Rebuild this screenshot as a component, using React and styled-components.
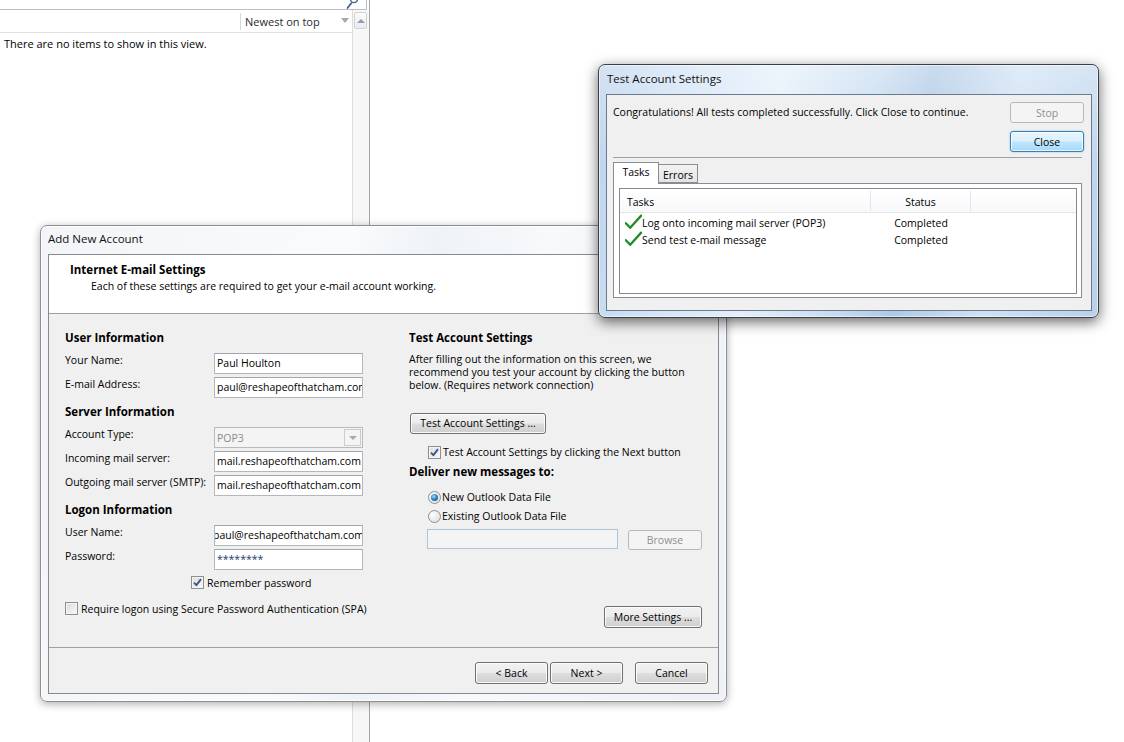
import React from 'react';
import styled, { createGlobalStyle, css } from 'styled-components';

const FONT = `"Segoe UI", "Open Sans", "Liberation Sans", sans-serif`;

const Global = createGlobalStyle`
  html, body { margin: 0; padding: 0; background: #fff; }
  body { font-family: ${FONT}; font-size: 10.5px; color: #000; }
  * { box-sizing: border-box; }
`;

const Desktop = styled.div`
  position: relative;
  width: 1124px;
  height: 742px;
  overflow: hidden;
  background: #fff;
`;

/* ---------- Outlook background pane ---------- */
const Pane = styled.div`
  width: 370px;
  height: 742px;
  border-right: 1px solid #a5a5a5;
  display: flex;
  flex-direction: column;
`;

const SearchStrip = styled.div`
  height: 10px;
  margin-right: 2px;
  border-right: 1px solid #b9bec6;
  border-bottom: 1px solid #b9bec6;
  display: flex;
  justify-content: flex-end;
  align-items: flex-end;
  padding-right: 8px;
  overflow: hidden;
`;

const PaneBody = styled.div`
  flex: 1;
  display: flex;
`;

const ListCol = styled.div`
  flex: 1;
  display: flex;
  flex-direction: column;
`;

const ListHeader = styled.div`
  height: 23px;
  display: flex;
  align-items: center;
  border-bottom: 1px solid #e2e2e2;
`;

const HeaderSpacer = styled.div`
  flex: 1;
`;

const HeaderSep = styled.div`
  width: 1px;
  height: 17px;
  background: #d8d8d8;
`;

const SortLabel = styled.div`
  width: 97px;
  padding-left: 4px;
  color: #2b2b2b;
  font-size: 11px;
  white-space: nowrap;
`;

const SortArrow = styled.div`
  width: 0;
  height: 0;
  margin: 0 3px 2px 3px;
  border-left: 4.5px solid transparent;
  border-right: 4.5px solid transparent;
  border-top: 5px solid #a8a8a8;
`;

const EmptyMsg = styled.div`
  padding: 3px 4px;
  line-height: 15px;
  font-size: 11px;
  color: #000;
`;

const ScrollCol = styled.div`
  width: 17px;
  border-left: 1px solid #dcdcdc;
  background: #f7f7f7;
  padding: 2px 2px 0 1px;
`;

const ScrollUp = styled.div`
  height: 17px;
  border: 1px solid #cfd3d8;
  border-radius: 2px;
  background: linear-gradient(#fbfbfb, #e9ebee);
  display: flex;
  align-items: center;
  justify-content: center;
`;

const UpTri = styled.div`
  width: 0;
  height: 0;
  border-left: 4px solid transparent;
  border-right: 4px solid transparent;
  border-bottom: 4px solid #8d9db4;
`;

/* ---------- Windows ---------- */
const Window = styled.div`
  position: absolute;
  left: ${p => p.$left}px;
  top: ${p => p.$top}px;
  width: ${p => p.$width}px;
  display: flex;
  flex-direction: column;
  border-radius: 7px;
`;

const InactiveWindow = styled(Window)`
  border: 1px solid #8c8e90;
  padding: 0 7px 7px 7px;
  background: linear-gradient(100deg, #f2f4f7 0%, #fafbfc 40%, #eef3f8 52%, #f7f9fb 66%, #eef1f5 100%);
  box-shadow: inset 0 0 0 1px rgba(255, 255, 255, 0.8), 0 2px 9px rgba(0, 0, 0, 0.32);
`;

const ActiveWindow = styled(Window)`
  border: 1px solid #3b3f45;
  padding: 0 6px 6px 7px;
  background:
    linear-gradient(180deg, rgba(255,255,255,0.35) 0%, rgba(255,255,255,0) 40%),
    linear-gradient(100deg, #bcd3ec 0%, #d3e4f6 18%, #e4effa 34%, #c6dbf0 52%, #aec8e5 62%, #cfe1f4 78%, #b9d1eb 100%);
  box-shadow: inset 0 0 0 1px rgba(255, 255, 255, 0.55), 0 4px 14px rgba(0, 0, 0, 0.6);
`;

const TitleBar = styled.div`
  height: ${p => p.$h}px;
  display: flex;
  align-items: center;
  padding-left: ${p => p.$pad || 0}px;
  padding-bottom: 3px;
  color: #111;
  font-size: 11.5px;
  white-space: nowrap;
`;

const Client = styled.div`
  border: 1px solid ${p => p.$border};
  background: #f0f0f0;
  display: flex;
  flex-direction: column;
`;

/* ---------- Buttons ---------- */
const Btn = styled.div`
  flex: none;
  width: ${p => p.$w}px;
  height: ${p => p.$h || 22}px;
  display: flex;
  align-items: center;
  justify-content: center;
  border: 1px solid #707070;
  border-radius: 3px;
  background: linear-gradient(#f2f2f2 0%, #ebebeb 48%, #dddddd 52%, #cfcfcf 100%);
  box-shadow: inset 0 0 0 1px rgba(255, 255, 255, 0.85);
  color: #000;
  white-space: nowrap;
  ${p => p.$variant === 'disabled' && css`
    border-color: #b5b9bc;
    background: #f4f4f4;
    box-shadow: none;
    color: #8f8f8f;
  `}
  ${p => p.$variant === 'default' && css`
    border-color: #3c7fb1;
    background: linear-gradient(#e8f5fd 0%, #d9f0fc 48%, #bee6fd 52%, #a7d9f5 100%);
    box-shadow: inset 0 0 0 1px rgba(255, 255, 255, 0.7), 0 0 2px rgba(60, 160, 230, 0.6);
  `}
`;

/* ---------- Form controls ---------- */
const CheckBoxBox = styled.span`
  flex: none;
  width: 13px;
  height: 13px;
  border: 1px solid #8e8f8f;
  background: linear-gradient(135deg, #dcdcdc, #f8f8f8);
  box-shadow: inset 0 0 0 1px #f4f4f4;
  display: inline-flex;
  align-items: center;
  justify-content: center;
`;

const RadioDot = styled.span`
  flex: none;
  width: 13px;
  height: 13px;
  border-radius: 50%;
  border: 1px solid #8e8f8f;
  background: radial-gradient(circle at 35% 35%, #ffffff, #d8d8d8);
  display: inline-flex;
  align-items: center;
  justify-content: center;
  &::after {
    content: '';
    display: ${p => (p.$on ? 'block' : 'none')};
    width: 7px;
    height: 7px;
    border-radius: 50%;
    background: radial-gradient(circle at 40% 35%, #a8e0fb 0%, #2a87c8 45%, #0d4d84 100%);
  }
`;

const Check = ({ checked }) => (
  <CheckBoxBox>
    {checked && (
      <svg width="9" height="9" viewBox="0 0 9 9">
        <path d="M1 4.6 L3.4 7.2 L8 1.2" fill="none" stroke="#3d5489" strokeWidth="1.9" strokeLinejoin="round" />
      </svg>
    )}
  </CheckBoxBox>
);

const OptionRow = styled.div`
  display: flex;
  align-items: center;
  gap: ${p => p.$gap || 3}px;
  height: 15px;
  margin-top: ${p => p.$mt || 0}px;
  padding-left: ${p => p.$indent || 0}px;
  white-space: nowrap;
`;

const SectionTitle = styled.div`
  font-weight: 700;
  font-size: 11.5px;
  line-height: 15px;
  height: 15px;
  margin: ${p => (p.$tight ? '4px 0 0 0' : '3px 0 8px 0')};
  white-space: nowrap;
`;

const FieldRow = styled.div`
  display: grid;
  grid-template-columns: 149px 149px;
  height: 21px;
  margin-bottom: 3px;
`;

const FieldLabel = styled.div`
  line-height: 15px;
  white-space: nowrap;
`;

const TextBox = styled.div`
  height: 21px;
  border: 1px solid #b4b8bd;
  border-top-color: #a3a7ad;
  background: #fff;
  padding-left: 2px;
  line-height: 18px;
  overflow: hidden;
  white-space: nowrap;
  color: ${p => (p.$secret ? '#1d3a6b' : '#000')};
`;

const Shifted = styled.span`
  display: inline-block;
  margin-left: ${p => p.$shift}px;
`;

const Combo = styled.div`
  height: 21px;
  border: 1px solid #b7bbbf;
  background: #f4f4f4;
  display: flex;
  align-items: center;
  justify-content: space-between;
  padding: 0 1px 0 2px;
  color: #8b8b8b;
`;

const ComboBtn = styled.div`
  width: 17px;
  height: 17px;
  border: 1px solid #c9cdd1;
  background: #f4f4f4;
  display: flex;
  align-items: center;
  justify-content: center;
  &::after {
    content: '';
    border-left: 4px solid transparent;
    border-right: 4px solid transparent;
    border-top: 4px solid #a9a9a9;
  }
`;

/* ---------- Add New Account client ---------- */
const WizardHeader = styled.div`
  height: 59px;
  background: #fff;
  border-bottom: 1px solid #a0a0a0;
  padding: 7px 0 0 21px;
`;

const WizardTitle = styled.div`
  font-weight: 700;
  font-size: 11.5px;
  line-height: 16px;
`;

const WizardSub = styled.div`
  line-height: 16px;
  padding-left: 21px;
`;

const WizardBody = styled.div`
  height: 333px;
  display: flex;
  gap: 46px;
  padding: 13px 16px 19px 16px;
`;

const LeftCol = styled.div`
  width: 298px;
  display: flex;
  flex-direction: column;
`;

const RightCol = styled.div`
  width: 293px;
  display: flex;
  flex-direction: column;
`;

const Para = styled.div`
  line-height: 13px;
  margin-top: -0.5px;
`;

const PathRow = styled.div`
  display: flex;
  gap: 10px;
  margin-top: 5px;
  padding-left: 18px;
`;

const PathBox = styled.div`
  width: 192px;
  height: 20px;
  border: 1px solid #aec4da;
  background: #f4f4f4;
`;

const WizardFooter = styled.div`
  height: 46px;
  border-top: 1px solid #a0a0a0;
  display: flex;
  justify-content: flex-end;
  padding: 14px 10px 0 0;
`;

/* ---------- Test dialog client ---------- */
const TestTop = styled.div`
  display: flex;
  justify-content: space-between;
  padding: 7px 7px 0 6px;
`;

const TestMsg = styled.div`
  line-height: 16px;
  padding-top: 2px;
  white-space: nowrap;
`;

const BtnStack = styled.div`
  display: flex;
  flex-direction: column;
  gap: 8px;
`;

const Rule = styled.div`
  height: 1px;
  margin: 5px 9px 0 6px;
  background: #a0a0a0;
`;

const TabStrip = styled.div`
  display: flex;
  align-items: flex-end;
  margin: 4px 0 0 6px;
  height: 21px;
  position: relative;
  z-index: 1;
`;

const Tab = styled.div`
  width: ${p => p.$w}px;
  height: ${p => (p.$active ? 22 : 19)}px;
  margin-bottom: ${p => (p.$active ? -1 : 0)}px;
  margin-left: ${p => (p.$active ? 0 : -1)}px;
  border: 1px solid #898c95;
  border-bottom: ${p => (p.$active ? 'none' : '1px solid #898c95')};
  background: ${p => (p.$active ? '#fff' : 'linear-gradient(#f3f3f3, #e3e3e3)')};
  display: flex;
  justify-content: center;
  padding-top: ${p => (p.$active ? 2 : 3)}px;
  line-height: 15px;
`;

const TabPanel = styled.div`
  height: 115px;
  margin: 0 9px 12px 6px;
  border: 1px solid #898c95;
  background: #fff;
  padding: 4px 4px 3px 5px;
`;

const ListView = styled.div`
  height: 106px;
  border: 1px solid #828790;
  background: #fff;
`;

const ListGrid = styled.div`
  display: grid;
  grid-template-columns: 251px 100px 1fr;
  height: ${p => (p.$head ? 24 : 17)}px;
  align-items: center;
  ${p => p.$head && css`
    border-bottom: 1px solid #e5e5e5;
    background: linear-gradient(#ffffff, #f7f8fa);
    margin-bottom: 1px;
    padding-top: 3px;
  `}
`;

const HeadCell = styled.div`
  height: 100%;
  display: flex;
  align-items: center;
  justify-content: ${p => (p.$center ? 'center' : 'flex-start')};
  padding-left: ${p => (p.$center ? 0 : 7)}px;
  border-right: ${p => (p.$last ? 'none' : '1px solid #e3e5e8')};
  margin-top: -3px;
  padding-top: 3px;
`;

const TaskCell = styled.div`
  display: flex;
  align-items: center;
  padding-left: 5px;
  white-space: nowrap;
`;

const StatusCell = styled.div`
  text-align: center;
  white-space: nowrap;
`;

const Tick = () => (
  <svg width="17" height="17" viewBox="0 0 17 17" style={{ flex: 'none' }}>
    <path d="M0.8 9.2 L5.2 13.8 L16.2 1.6" fill="none" stroke="#1f8c25" strokeWidth="2.3" strokeLinecap="round" strokeLinejoin="round" />
  </svg>
);

const SearchGlyph = () => (
  <svg width="12" height="9" viewBox="0 0 12 9">
    <circle cx="8" cy="-1" r="3.6" fill="none" stroke="#44638d" strokeWidth="1.3" />
    <path d="M1.5 8 L5.3 3.2" stroke="#44638d" strokeWidth="1.8" strokeLinecap="round" />
  </svg>
);

export default function App() {
  return (
    <>
      <Global />
      <Desktop>
        <Pane>
          <SearchStrip>
            <SearchGlyph />
          </SearchStrip>
          <PaneBody>
            <ListCol>
              <ListHeader>
                <HeaderSpacer />
                <HeaderSep />
                <SortLabel>Newest on top</SortLabel>
                <SortArrow />
              </ListHeader>
              <EmptyMsg>There are no items to show in this view.</EmptyMsg>
            </ListCol>
            <ScrollCol>
              <ScrollUp>
                <UpTri />
              </ScrollUp>
            </ScrollCol>
          </PaneBody>
        </Pane>

        <InactiveWindow $left={40} $top={225} $width={687}>
          <TitleBar $h={28}>Add New Account</TitleBar>
          <Client $border="#858a92">
            <WizardHeader>
              <WizardTitle>Internet E-mail Settings</WizardTitle>
              <WizardSub>Each of these settings are required to get your e-mail account working.</WizardSub>
            </WizardHeader>
            <WizardBody>
              <LeftCol>
                <SectionTitle>User Information</SectionTitle>
                <FieldRow>
                  <FieldLabel>Your Name:</FieldLabel>
                  <TextBox>Paul Houlton</TextBox>
                </FieldRow>
                <FieldRow>
                  <FieldLabel>E-mail Address:</FieldLabel>
                  <TextBox>paul@reshapeofthatcham.com</TextBox>
                </FieldRow>
                <SectionTitle>Server Information</SectionTitle>
                <FieldRow>
                  <FieldLabel>Account Type:</FieldLabel>
                  <Combo>
                    POP3
                    <ComboBtn />
                  </Combo>
                </FieldRow>
                <FieldRow>
                  <FieldLabel>Incoming mail server:</FieldLabel>
                  <TextBox>mail.reshapeofthatcham.com</TextBox>
                </FieldRow>
                <FieldRow>
                  <FieldLabel>Outgoing mail server (SMTP):</FieldLabel>
                  <TextBox>mail.reshapeofthatcham.com</TextBox>
                </FieldRow>
                <SectionTitle>Logon Information</SectionTitle>
                <FieldRow>
                  <FieldLabel>User Name:</FieldLabel>
                  <TextBox>
                    <Shifted $shift={-4}>paul@reshapeofthatcham.com</Shifted>
                  </TextBox>
                </FieldRow>
                <FieldRow>
                  <FieldLabel>Password:</FieldLabel>
                  <TextBox $secret>********</TextBox>
                </FieldRow>
                <OptionRow $mt={2} $indent={126}>
                  <Check checked />
                  Remember password
                </OptionRow>
                <OptionRow $mt={11}>
                  <Check />
                  Require logon using Secure Password Authentication (SPA)
                </OptionRow>
              </LeftCol>

              <RightCol>
                <SectionTitle>Test Account Settings</SectionTitle>
                <Para>
                  After filling out the information on this screen, we
                  <br />
                  recommend you test your account by clicking the button
                  <br />
                  below. (Requires network connection)
                </Para>
                <Btn $w={136} $h={21} style={{ marginTop: 21, marginLeft: 1 }}>
                  Test Account Settings ...
                </Btn>
                <OptionRow $mt={11} $indent={19} $gap={2}>
                  <Check checked />
                  Test Account Settings by clicking the Next button
                </OptionRow>
                <SectionTitle $tight>Deliver new messages to:</SectionTitle>
                <OptionRow $mt={11} $indent={19} $gap={1}>
                  <RadioDot $on />
                  New Outlook Data File
                </OptionRow>
                <OptionRow $mt={4} $indent={19} $gap={1}>
                  <RadioDot />
                  Existing Outlook Data File
                </OptionRow>
                <PathRow>
                  <PathBox />
                  <Btn $w={74} $h={20} $variant="disabled" style={{ marginTop: 1 }}>
                    Browse
                  </Btn>
                </PathRow>
                <Btn $w={98} $h={22} style={{ marginTop: 'auto', alignSelf: 'flex-end' }}>
                  More Settings ...
                </Btn>
              </RightCol>
            </WizardBody>
            <WizardFooter>
              <Btn $w={73} style={{ marginRight: 2 }}>&lt; Back</Btn>
              <Btn $w={73} style={{ marginRight: 12 }}>Next &gt;</Btn>
              <Btn $w={73}>Cancel</Btn>
            </WizardFooter>
          </Client>
        </InactiveWindow>

        <ActiveWindow $left={598} $top={64} $width={501}>
          <TitleBar $h={29} $pad={1}>Test Account Settings</TitleBar>
          <Client $border="#6b7a8c">
            <TestTop>
              <TestMsg>Congratulations! All tests completed successfully. Click Close to continue.</TestMsg>
              <BtnStack>
                <Btn $w={74} $h={21} $variant="disabled">Stop</Btn>
                <Btn $w={74} $h={21} $variant="default">Close</Btn>
              </BtnStack>
            </TestTop>
            <Rule />
            <TabStrip>
              <Tab $w={46} $active>Tasks</Tab>
              <Tab $w={40}>Errors</Tab>
            </TabStrip>
            <TabPanel>
              <ListView>
                <ListGrid $head>
                  <HeadCell>Tasks</HeadCell>
                  <HeadCell $center>Status</HeadCell>
                  <HeadCell $last />
                </ListGrid>
                <ListGrid>
                  <TaskCell>
                    <Tick />
                    Log onto incoming mail server (POP3)
                  </TaskCell>
                  <StatusCell>Completed</StatusCell>
                  <div />
                </ListGrid>
                <ListGrid>
                  <TaskCell>
                    <Tick />
                    Send test e-mail message
                  </TaskCell>
                  <StatusCell>Completed</StatusCell>
                  <div />
                </ListGrid>
              </ListView>
            </TabPanel>
          </Client>
        </ActiveWindow>
      </Desktop>
    </>
  );
}
